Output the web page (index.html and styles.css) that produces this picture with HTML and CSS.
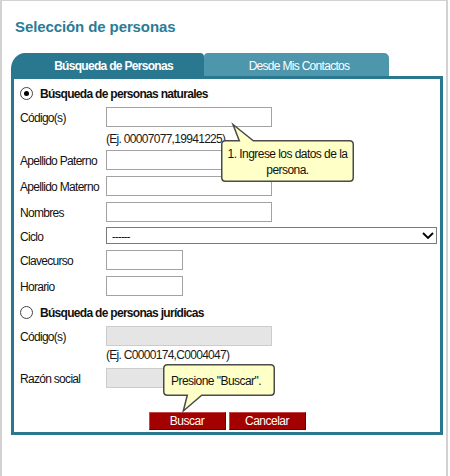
FILE: index.html
```html
<!DOCTYPE html>
<html lang="es">
<head>
<meta charset="utf-8">
<title>Selección de personas</title>
<link rel="stylesheet" href="styles.css">
</head>
<body>
<div class="page">
  <h1 class="title">Selección de personas</h1>
  <div class="tabs">
    <div class="tab tab-active">Búsqueda de Personas</div>
    <div class="tab tab-inactive">Desde Mis Contactos</div>
  </div>
  <div class="panel">
    <div class="section"><span class="radio checked"></span><span>Búsqueda de personas naturales</span></div>
    <div class="row mt4"><label>Código(s)</label><input type="text" class="field"></div>
    <div class="hint mt5">(Ej. 00007077,19941225)</div>
    <div class="row mt4"><label>Apellido Paterno</label><input type="text" class="field"></div>
    <div class="row"><label>Apellido Materno</label><input type="text" class="field"></div>
    <div class="row"><label>Nombres</label><input type="text" class="field"></div>
    <div class="row mt5"><label>Ciclo</label>
      <div class="select-wrap">
        <select class="select"><option>------</option></select>
        <svg class="chevron" width="12" height="7" viewBox="0 0 12 7"><path d="M1 1 L6 6 L11 1" fill="none" stroke="#000" stroke-width="1.8"/></svg>
      </div>
    </div>
    <div class="row"><label>Clavecurso</label><input type="text" class="field short"></div>
    <div class="row"><label>Horario</label><input type="text" class="field short"></div>
    <div class="section mt7"><span class="radio"></span><span>Búsqueda de personas jurídicas</span></div>
    <div class="row mt4"><label>Código(s)</label><input type="text" class="field" disabled></div>
    <div class="hint mt2">(Ej. C0000174,C0004047)</div>
    <div class="row"><label>Razón social</label><input type="text" class="field" disabled></div>
    <div class="actions">
      <button class="btn">Buscar</button>
      <button class="btn">Cancelar</button>
    </div>

    <div class="tip tip-one">
      <svg class="tip-shape" width="133" height="42" viewBox="0 0 133 42"><path d="M4.5 0.75 H18.3 L12 -15.5 L32.3 0.75 H128.5 Q132.25 0.75 132.25 4.5 V37.5 Q132.25 41.25 128.5 41.25 H4.5 Q0.75 41.25 0.75 37.5 V4.5 Q0.75 0.75 4.5 0.75 Z" fill="#ffffc8" stroke="#4a4a4a" stroke-width="1.5"/></svg>
      <div class="tip-text center">1. Ingrese los datos de la<br>persona.</div>
    </div>
    <div class="tip tip-two">
      <svg class="tip-shape" width="112" height="32" viewBox="0 0 112 32"><path d="M4.5 0.75 H107.5 Q111.25 0.75 111.25 4.5 V27.5 Q111.25 31.25 107.5 31.25 H38.7 L20.3 47 L24.3 31.25 H4.5 Q0.75 31.25 0.75 27.5 V4.5 Q0.75 0.75 4.5 0.75 Z" fill="#ffffc8" stroke="#4a4a4a" stroke-width="1.5"/></svg>
      <div class="tip-text">Presione "Buscar".</div>
    </div>
  </div>
</div>
</body>
</html>
```
FILE: styles.css
```css
html, body {
  margin: 0;
  padding: 0;
  background: #ffffff;
}

body {
  font-family: "Liberation Sans", Arial, sans-serif;
  font-size: 12px;
  color: #111111;
  letter-spacing: -0.7px;
}

.page {
  box-sizing: border-box;
  width: 448px;
  min-height: 476px;
  border-style: solid;
  border-color: #d2d2d2;
  border-width: 1px 2px 0 2px;
  padding-left: 9px;
}

.title {
  margin: 17px 0 17px 4px;
  font-size: 15px;
  line-height: 18px;
  font-weight: bold;
  color: #2b7b97;
  letter-spacing: -0.1px;
}

.tabs {
  display: flex;
  height: 23px;
}

.tab {
  box-sizing: border-box;
  height: 23px;
  padding-top: 3px;
  line-height: 20px;
  text-align: center;
  color: #ffffff;
  font-size: 12px;
}

.tab-active {
  width: 193px;
  padding-left: 12px;
  background: #29788f;
  font-weight: bold;
  border-top-left-radius: 14px 16px;
  border-top-right-radius: 4px;
}

.tab-inactive {
  width: 185px;
  padding-left: 5px;
  background: #4d96ac;
  border-top-left-radius: 4px;
  border-top-right-radius: 5px;
}

.panel {
  position: relative;
  box-sizing: border-box;
  width: 432px;
  border: 3px solid #29788f;
  padding: 5px 6px 2px 6px;
  background: #ffffff;
}

.section {
  display: flex;
  align-items: center;
  gap: 7px;
  height: 19px;
  font-weight: bold;
  color: #111111;
}

.radio {
  box-sizing: border-box;
  width: 13px;
  height: 13px;
  border-radius: 50%;
  border: 1px solid #444444;
  background: #ffffff;
  display: flex;
  align-items: center;
  justify-content: center;
  flex: none;
}

.radio.checked::after {
  content: "";
  width: 5px;
  height: 5px;
  border-radius: 50%;
  background: #000000;
}

.row {
  display: flex;
  align-items: center;
  margin-top: 6px;
}

.row label {
  flex: none;
  width: 86px;
  line-height: 14px;
  margin-top: 2px;
}

.mt2 { margin-top: 2px; }
.mt4 { margin-top: 4px; }
.mt5 { margin-top: 5px; }
.mt7 { margin-top: 7px; }

.field {
  box-sizing: border-box;
  width: 166px;
  height: 20px;
  margin: 0;
  padding: 0 3px;
  border: 1px solid #a2a2a2;
  background: #ffffff;
  font: inherit;
  outline: none;
}

.field.short {
  width: 77px;
}

.field:disabled {
  background: #e5e5e5;
  border-color: #cccccc;
}

.hint {
  margin-left: 86px;
  line-height: 14px;
  color: #1a1a1a;
}

.select-wrap {
  position: relative;
  width: 331px;
  height: 17px;
}

.select {
  appearance: none;
  -webkit-appearance: none;
  box-sizing: border-box;
  width: 331px;
  height: 17px;
  margin: 0;
  padding: 0 0 0 5px;
  border: 1px solid #7a7a7a;
  border-radius: 0;
  background: #ffffff;
  font-family: "Liberation Sans", Arial, sans-serif;
  font-size: 11px;
  letter-spacing: -0.7px;
  color: #000000;
  outline: none;
}

.chevron {
  position: absolute;
  right: 3px;
  top: 5px;
}

.actions {
  display: flex;
  justify-content: center;
  gap: 3px;
  margin-top: 24px;
}

.btn {
  box-sizing: border-box;
  width: 77px;
  height: 18px;
  margin: 0;
  padding: 0;
  border: 1px solid;
  border-color: #c24a4a #5e0000 #5e0000 #c24a4a;
  background: #a30000;
  color: #ffffff;
  font-family: "Liberation Sans", Arial, sans-serif;
  font-size: 12px;
  letter-spacing: -0.5px;
  line-height: 16px;
}

.tip {
  position: absolute;
}

.tip-one {
  left: 207px;
  top: 61px;
  width: 133px;
  height: 42px;
}

.tip-two {
  left: 149px;
  top: 285px;
  width: 112px;
  height: 32px;
}

.tip-shape {
  position: absolute;
  left: 0;
  top: 0;
  overflow: visible;
}

.tip-text {
  position: relative;
  line-height: 16px;
  color: #111111;
  letter-spacing: -0.55px;
}

.tip-one .tip-text {
  padding-top: 6px;
}

.tip-two .tip-text {
  padding: 9px 0 0 8px;
}

.center {
  text-align: center;
}
```
